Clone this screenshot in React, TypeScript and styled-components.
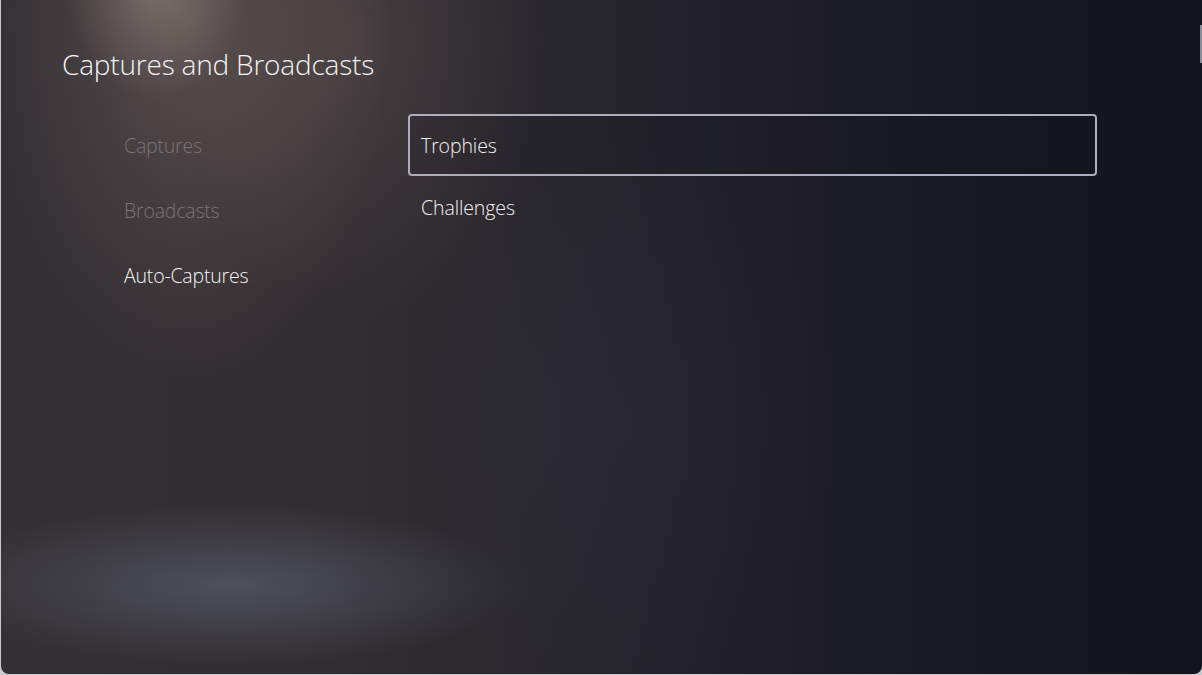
import styled, { createGlobalStyle } from 'styled-components'

const GlobalStyle = createGlobalStyle`
  html, body {
    margin: 0;
    padding: 0;
    background: #c9c9cc;
  }
  body {
    font-family: 'Open Sans', 'Noto Sans', sans-serif;
  }
`

const leftItems = [
  { label: 'Captures', dim: true },
  { label: 'Broadcasts', dim: true },
  { label: 'Auto-Captures', dim: false },
]

const rightItems = [
  { label: 'Trophies', focused: true },
  { label: 'Challenges', focused: false },
]

const Screen = styled.div`
  position: relative;
  box-sizing: border-box;
  width: 1201px;
  height: 674px;
  margin-left: 1px;
  overflow: hidden;
  border-radius: 0 0 8px 8px;
  padding: 44px 0 0 61px;
  display: flex;
  flex-direction: column;
  background:
    radial-gradient(ellipse 90px 120px at 155px -20px, rgba(175, 158, 150, 0.45), rgba(175, 158, 150, 0) 100%),
    radial-gradient(ellipse 200px 360px at 190px 20px, rgba(140, 122, 116, 0.4), rgba(140, 122, 116, 0) 100%),
    radial-gradient(ellipse 180px 280px at 360px 40px, rgba(115, 100, 96, 0.3), rgba(115, 100, 96, 0) 100%),
    radial-gradient(ellipse 300px 80px at 230px 585px, rgba(84, 88, 100, 0.8), rgba(84, 88, 100, 0) 100%),
    radial-gradient(ellipse 220px 280px at 620px 420px, rgba(46, 46, 58, 0.35), rgba(46, 46, 58, 0) 100%),
    linear-gradient(90deg, #343034 0%, #332e32 25%, #28262d 48%, #1b1b25 72%, #12131e 100%);
`

const Scroller = styled.div`
  position: absolute;
  right: 0;
  top: 25px;
  width: 2px;
  height: 38px;
  background: #8c8e96;
`

const Title = styled.h1`
  margin: 0;
  font-size: 28px;
  line-height: 40px;
  font-weight: 300;
  color: #f2f2f2;
  letter-spacing: -0.2px;
`

const Body = styled.div`
  margin-top: 30px;
  display: grid;
  grid-template-columns: 284px 689px;
  padding-left: 62px;
`

const SideMenu = styled.ul`
  list-style: none;
  margin: 0;
  padding: 0;
  display: flex;
  flex-direction: column;
  gap: 3px;
`

const SideItem = styled.li<{ $dim: boolean }>`
  height: 62px;
  display: flex;
  align-items: center;
  font-size: 19.5px;
  font-weight: 300;
  color: ${(p) => (p.$dim ? '#7a7474' : '#f4f4f4')};
  letter-spacing: -0.2px;
`

const OptionList = styled.ul`
  list-style: none;
  margin: 0;
  padding: 0;
  display: flex;
  flex-direction: column;
`

const Option = styled.li<{ $focused: boolean }>`
  box-sizing: border-box;
  height: 62px;
  display: flex;
  align-items: center;
  padding-left: 11px;
  font-size: 19.5px;
  font-weight: 300;
  color: #f2f2f2;
  letter-spacing: -0.1px;
  border-radius: 4px;
  border: 2px solid ${(p) => (p.$focused ? '#aeadbd' : 'transparent')};
  background: ${(p) => (p.$focused ? 'rgba(20, 20, 28, 0.12)' : 'transparent')};
`

const App = () => {
  return (
    <>
      <GlobalStyle />
      <Screen>
        <Scroller />
        <Title>Captures and Broadcasts</Title>
        <Body>
          <SideMenu>
            {leftItems.map((item) => (
              <SideItem key={item.label} $dim={item.dim}>
                {item.label}
              </SideItem>
            ))}
          </SideMenu>
          <OptionList>
            {rightItems.map((item) => (
              <Option key={item.label} $focused={item.focused}>
                {item.label}
              </Option>
            ))}
          </OptionList>
        </Body>
      </Screen>
    </>
  )
}

export default App
